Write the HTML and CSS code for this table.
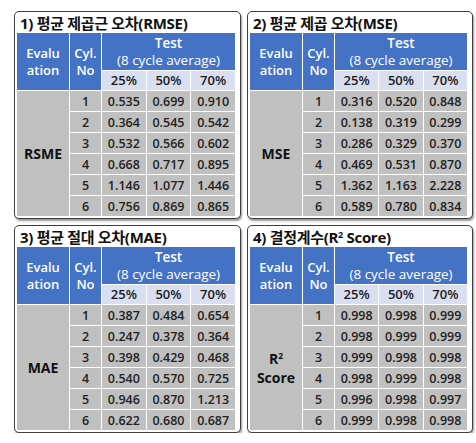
FILE: index.html
```html
<!DOCTYPE html>
<html lang="ko">
<head>
    <meta charset="UTF-8">
    <meta name="viewport" content="width=device-width, initial-scale=1.0">
    <title>Test Error Metrics</title>
    <link rel="stylesheet" href="styles.css">
</head>
<body>

<div class="board">
    <div class="panel">
        <div class="panel-title">1) 평균 제곱근 오차(RMSE)</div>
        <table class="metric">
            <thead>
                <tr>
                    <th rowspan="2" class="col-eval">Evalu<br>ation</th>
                    <th rowspan="2" class="col-cyl">Cyl.<br>No</th>
                    <th colspan="3" class="test"><b>Test</b><br>(8 cycle average)</th>
                </tr>
                <tr class="sub">
                    <th>25%</th><th>50%</th><th>70%</th>
                </tr>
            </thead>
            <tbody>
                <tr><td rowspan="6" class="label">RSME</td><td>1</td><td>0.535</td><td>0.699</td><td>0.910</td></tr>
                <tr><td>2</td><td>0.364</td><td>0.545</td><td>0.542</td></tr>
                <tr><td>3</td><td>0.532</td><td>0.566</td><td>0.602</td></tr>
                <tr><td>4</td><td>0.668</td><td>0.717</td><td>0.895</td></tr>
                <tr><td>5</td><td>1.146</td><td>1.077</td><td>1.446</td></tr>
                <tr><td>6</td><td>0.756</td><td>0.869</td><td>0.865</td></tr>
            </tbody>
        </table>
    </div>

    <div class="panel">
        <div class="panel-title">2) 평균 제곱 오차(MSE)</div>
        <table class="metric">
            <thead>
                <tr>
                    <th rowspan="2" class="col-eval">Evalu<br>ation</th>
                    <th rowspan="2" class="col-cyl">Cyl.<br>No</th>
                    <th colspan="3" class="test"><b>Test</b><br>(8 cycle average)</th>
                </tr>
                <tr class="sub">
                    <th>25%</th><th>50%</th><th>70%</th>
                </tr>
            </thead>
            <tbody>
                <tr><td rowspan="6" class="label">MSE</td><td>1</td><td>0.316</td><td>0.520</td><td>0.848</td></tr>
                <tr><td>2</td><td>0.138</td><td>0.319</td><td>0.299</td></tr>
                <tr><td>3</td><td>0.286</td><td>0.329</td><td>0.370</td></tr>
                <tr><td>4</td><td>0.469</td><td>0.531</td><td>0.870</td></tr>
                <tr><td>5</td><td>1.362</td><td>1.163</td><td>2.228</td></tr>
                <tr><td>6</td><td>0.589</td><td>0.780</td><td>0.834</td></tr>
            </tbody>
        </table>
    </div>

    <div class="panel">
        <div class="panel-title">3) 평균 절대 오차(MAE)</div>
        <table class="metric">
            <thead>
                <tr>
                    <th rowspan="2" class="col-eval">Evalu<br>ation</th>
                    <th rowspan="2" class="col-cyl">Cyl.<br>No</th>
                    <th colspan="3" class="test"><b>Test</b><br>(8 cycle average)</th>
                </tr>
                <tr class="sub">
                    <th>25%</th><th>50%</th><th>70%</th>
                </tr>
            </thead>
            <tbody>
                <tr><td rowspan="6" class="label">MAE</td><td>1</td><td>0.387</td><td>0.484</td><td>0.654</td></tr>
                <tr><td>2</td><td>0.247</td><td>0.378</td><td>0.364</td></tr>
                <tr><td>3</td><td>0.398</td><td>0.429</td><td>0.468</td></tr>
                <tr><td>4</td><td>0.540</td><td>0.570</td><td>0.725</td></tr>
                <tr><td>5</td><td>0.946</td><td>0.870</td><td>1.213</td></tr>
                <tr><td>6</td><td>0.622</td><td>0.680</td><td>0.687</td></tr>
            </tbody>
        </table>
    </div>

    <div class="panel">
        <div class="panel-title">4) 결정계수(R<sup>2</sup> Score)</div>
        <table class="metric">
            <thead>
                <tr>
                    <th rowspan="2" class="col-eval">Evalu<br>ation</th>
                    <th rowspan="2" class="col-cyl">Cyl.<br>No</th>
                    <th colspan="3" class="test"><b>Test</b><br>(8 cycle average)</th>
                </tr>
                <tr class="sub">
                    <th>25%</th><th>50%</th><th>70%</th>
                </tr>
            </thead>
            <tbody>
                <tr><td rowspan="6" class="label">R<sup>2</sup><br>Score</td><td>1</td><td>0.998</td><td>0.998</td><td>0.999</td></tr>
                <tr><td>2</td><td>0.998</td><td>0.999</td><td>0.999</td></tr>
                <tr><td>3</td><td>0.999</td><td>0.998</td><td>0.998</td></tr>
                <tr><td>4</td><td>0.998</td><td>0.999</td><td>0.998</td></tr>
                <tr><td>5</td><td>0.996</td><td>0.998</td><td>0.997</td></tr>
                <tr><td>6</td><td>0.999</td><td>0.998</td><td>0.998</td></tr>
            </tbody>
        </table>
    </div>
</div>

</body>
</html>
```

FILE: styles.css
```css
/* Page and 2x2 layout */
body {
    margin: 0;
    background-color: #ffffff;
    font-family: "Open Sans", "Noto Sans CJK KR", sans-serif;
    color: #1a1a1a;
}

.board {
    display: grid;
    grid-template-columns: 227px 226px;
    grid-auto-rows: 208px;
    gap: 6px 6px;
    padding: 11px 0 0 14px;
}

/* Each metric box */
.panel {
    border: 1px solid #3f3f3f;
    border-radius: 5px;
    box-shadow: 1px 2px 2px rgba(0, 0, 0, 0.4);
    padding: 0 4px 2px 1px;
    background-color: #ffffff;
}

.panel-title {
    height: 20px;
    line-height: 23px;
    padding-left: 4px;
    font-size: 15px;
    font-weight: 700;
    letter-spacing: -0.3px;
    color: #111;
    white-space: nowrap;
}

.panel-title sup,
.label sup {
    font-size: 0.6em;
    line-height: 0;
    vertical-align: 0.6em;
}

/* Metric table */
.metric {
    width: 100%;
    border-collapse: collapse;
    table-layout: fixed;
}

.metric th,
.metric td {
    border: 1px solid #ffffff;
    padding: 0;
    text-align: center;
}

.metric th {
    background-color: #4472c4;
    color: #ffffff;
    font-size: 13px;
    font-weight: 600;
    line-height: 17px;
}

.metric .col-eval {
    width: 52px;
}

.metric .col-cyl {
    width: 31px;
}

.metric .test {
    height: 37px;
    font-weight: 400;
    font-size: 13.5px;
}

.metric .test b {
    font-weight: 600;
}

.metric .sub th {
    height: 19px;
    background-color: #d9dff0;
    color: #1a1a1a;
    font-size: 13px;
}

.metric td {
    height: 20px;
    background-color: #c0c0c0;
    font-size: 12.5px;
    font-weight: 600;
    color: #222;
}

.metric td.label {
    font-size: 14px;
    font-weight: 700;
    line-height: 19px;
    color: #111;
}
```
